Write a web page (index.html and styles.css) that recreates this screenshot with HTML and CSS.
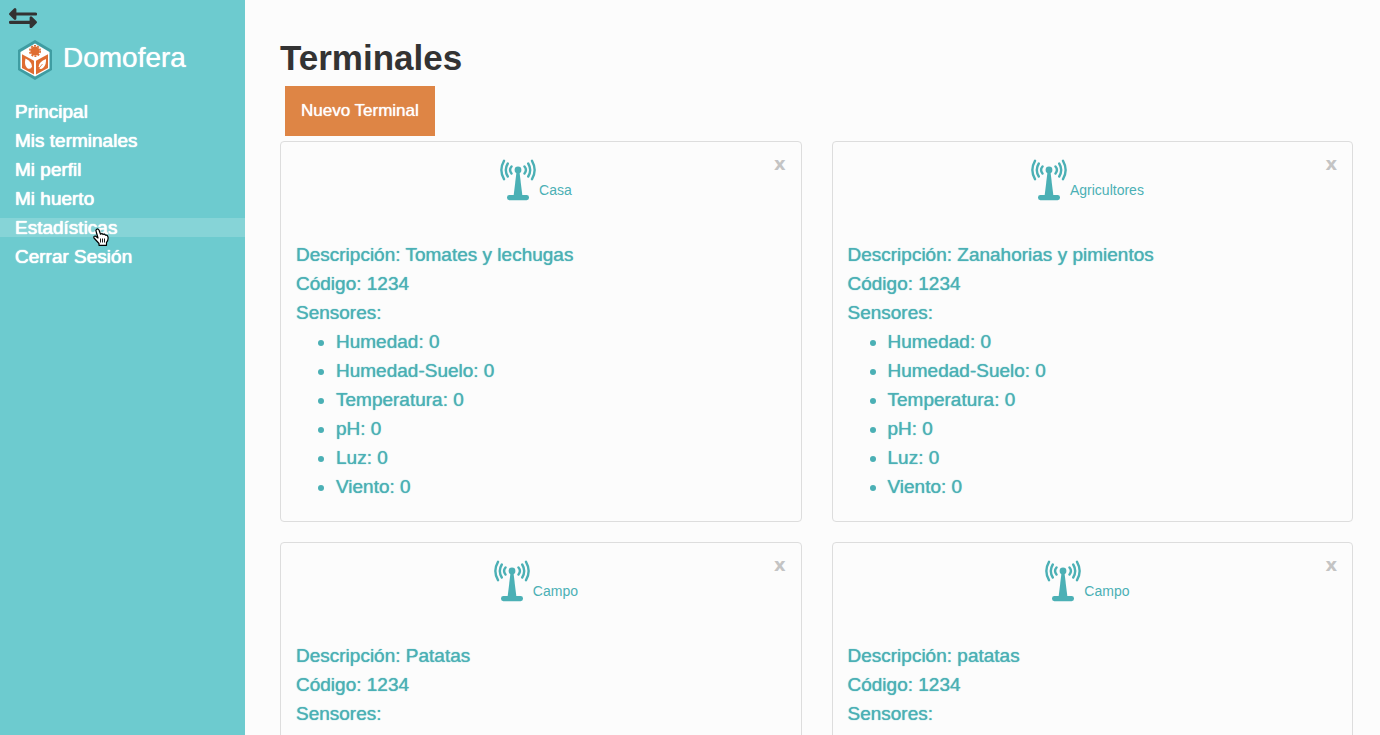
FILE: index.html
```html
<!DOCTYPE html>
<html lang="es">
<head>
<meta charset="utf-8">
<title>Domofera - Terminales</title>
<link rel="stylesheet" href="styles.css">
</head>
<body>
<svg class="defs" aria-hidden="true">
  <symbol id="antenna" viewBox="0 0 36 42">
    <g fill="none" stroke="currentColor" stroke-width="2.400" stroke-linecap="round">
      <path d="M11.500 7.500Q8.600 11 11.500 14.500M7.800 4.500Q3.800 11 7.800 17.500M4 1.800Q-1.300 11 4 20.200"/>
      <path d="M24.500 7.500Q27.400 11 24.500 14.500M28.200 4.500Q32.200 11 28.200 17.500M32 1.800Q37.300 11 32 20.200"/>
    </g>
    <g fill="currentColor">
      <circle cx="18" cy="11" r="3.400"/>
      <path d="M16.600 12h2.800l3 25h-8.800z"/>
      <rect x="7" y="36" width="22" height="5.200" rx="2.400"/>
    </g>
  </symbol>
</svg>
<div class="app">
  <aside class="sidebar">
    <button class="toggle" type="button" aria-label="Alternar menú">
      <svg class="toggle-icon" viewBox="0 0 28 20">
        <g fill="#333" stroke="#333" stroke-linejoin="round" stroke-linecap="round">
          <path d="M1.500 6 6 1.500v9z" stroke-width="2.800"/>
          <path d="M6 6h20.500M1.500 14.300h20" stroke-width="3.200"/>
          <path d="M26.500 14.300 22 9.800v9z" stroke-width="2.800"/>
        </g>
      </svg>
    </button>
    <div class="brand">
      <svg class="logo" viewBox="0 0 36 40" aria-hidden="true">
        <path d="M18 0 35 10v20L18 40 1 30V10z" fill="#3f9da2"/>
        <path d="M18 3.500 32.500 12v16.500L18 36.500 3.500 28.500V12z" fill="#fff"/>
        <path d="M5 14.300 17 20.800V34.600L5 27.900zM31 14.300 19 20.800V34.600l12-6.700z" fill="#df6d32"/>
        <circle cx="18" cy="11" r="4.600" fill="#df6d32"/>
        <circle cx="18" cy="11" r="5.200" fill="none" stroke="#df6d32" stroke-width="1.600" stroke-dasharray="2 1.270"/>
        <path d="M8.500 18.500Q15 22 15 26.500Q13.800 30.300 10 28Q7 25 8.500 18.500z" fill="#fff"/>
        <path d="M29 19Q22 21.500 21.700 26.500Q22.500 31 26.500 27.500Q29.500 24 29 19z" fill="#fff"/>
        <path d="m20.500 30 5-6" fill="none" stroke="#df6d32" stroke-width=".8"/>
      </svg>
      <span>Domofera</span>
    </div>
    <nav class="menu">
      <a href="#">Principal</a>
      <a href="#">Mis terminales</a>
      <a href="#">Mi perfil</a>
      <a href="#">Mi huerto</a>
      <a class="hovered" href="#">Estadísticas</a>
      <a href="#">Cerrar Sesión</a>
    </nav>
  </aside>
  <main class="content">
    <h1>Terminales</h1>
    <button class="new" type="button">Nuevo Terminal</button>
    <div class="cards">
      <article class="card">
        <header><h2><svg class="antenna"><use href="#antenna"/></svg>Casa</h2><button class="close" type="button" aria-label="Eliminar Casa">x</button></header>
        <p>Descripción: Tomates y lechugas</p>
        <p>Código: 1234</p>
        <p>Sensores:</p>
        <ul><li>Humedad: 0</li><li>Humedad-Suelo: 0</li><li>Temperatura: 0</li><li>pH: 0</li><li>Luz: 0</li><li>Viento: 0</li></ul>
      </article>
      <article class="card">
        <header><h2><svg class="antenna"><use href="#antenna"/></svg>Agricultores</h2><button class="close" type="button" aria-label="Eliminar Agricultores">x</button></header>
        <p>Descripción: Zanahorias y pimientos</p>
        <p>Código: 1234</p>
        <p>Sensores:</p>
        <ul><li>Humedad: 0</li><li>Humedad-Suelo: 0</li><li>Temperatura: 0</li><li>pH: 0</li><li>Luz: 0</li><li>Viento: 0</li></ul>
      </article>
      <article class="card">
        <header><h2><svg class="antenna"><use href="#antenna"/></svg>Campo</h2><button class="close" type="button" aria-label="Eliminar Campo">x</button></header>
        <p>Descripción: Patatas</p>
        <p>Código: 1234</p>
        <p>Sensores:</p>
      </article>
      <article class="card">
        <header><h2><svg class="antenna"><use href="#antenna"/></svg>Campo</h2><button class="close" type="button" aria-label="Eliminar Campo">x</button></header>
        <p>Descripción: patatas</p>
        <p>Código: 1234</p>
        <p>Sensores:</p>
      </article>
    </div>
  </main>
</div>
<svg class="pointer" viewBox="0 0 16 18" aria-hidden="true">
  <path d="M3.500 1.500Q5 .2 6 2L7.500 6.200Q9 5 10 6.500Q11.500 5.600 12.500 7.200Q14.500 6.800 15 9Q15.500 12.500 13.500 14.500V17.300H6V15.500L1 10Q.3 8 2.300 8L5 10 3 3Q2.700 2 3.500 1.500z" fill="#fff" stroke="#000" stroke-width="1.200" stroke-linejoin="round"/>
  <path d="M7.500 10.500v4M9.500 10.500v4M11.500 10.500v4" fill="none" stroke="#000" stroke-width=".9"/>
</svg>
</body>
</html>
```
FILE: styles.css
```css
* {
  box-sizing: border-box;
}

body {
  margin: 0;
  background: #fcfcfc;
  color: #333;
  font-family: "Liberation Sans", Arial, sans-serif;
  font-size: 19px;
  line-height: 29px;
}

h1, h2, p, ul {
  margin: 0;
}

button {
  border: 0;
  font-family: inherit;
  cursor: pointer;
}

.defs {
  display: none;
}

.app {
  display: grid;
  grid-template-columns: 245px 1fr;
  height: 100vh;
}

.sidebar {
  background: #6dcbcf;
  color: #fff;
}

.toggle {
  display: block;
  padding: 8px 9px 0;
  background: none;
}

.toggle-icon {
  display: block;
  width: 28px;
  height: 20px;
}

.brand {
  display: flex;
  align-items: center;
  gap: 10px;
  height: 40px;
  margin: 12px 17px 0;
  font-size: 28px;
  text-shadow: 0 0 1px;
}

.brand span {
  padding-bottom: 5px;
}

.logo {
  width: 36px;
  height: 40px;
}

.menu {
  display: flex;
  flex-direction: column;
  gap: 10px;
  margin-top: 22px;
}

.menu a {
  padding: 0 15px;
  color: #fff;
  line-height: 19px;
  text-decoration: none;
  text-shadow: 0 0 1px, 0 0 1px;
}

.menu .hovered {
  background: #86d4d7;
}

.content {
  overflow-y: auto;
  scrollbar-width: none;
  padding: 37px 27px 20px 35px;
}

h1 {
  font-size: 35px;
  font-weight: bold;
  line-height: 42px;
}

.new {
  display: block;
  margin: 7px 5px 5px;
  padding: 0 16px;
  background: #de8545;
  color: #fff;
  font-size: 17px;
  line-height: 50px;
  text-shadow: 0 0 1px;
}

.cards {
  display: grid;
  grid-template-columns: 1fr 1fr;
  gap: 20px 30px;
}

.card {
  min-height: 380px;
  padding: 0 15px 20px;
  border: 1px solid #ddd;
  border-radius: 4px;
  color: #4bb0b5;
}

.card header {
  display: flex;
  align-items: flex-start;
  height: 98px;
  padding-top: 13px;
}

.card h2 {
  display: flex;
  flex: 1;
  justify-content: center;
  gap: 3px;
  padding: 4px 0 0 2px;
  font-size: 14px;
  font-weight: normal;
  line-height: 62px;
}

.card p,
.card li {
  text-shadow: 0 0 1px;
}

.antenna {
  width: 36px;
  height: 42px;
}

.close {
  padding: 0;
  background: none;
  color: #c4c4c4;
  font-family: "DejaVu Sans", sans-serif;
  font-size: 18px;
  font-weight: bold;
  line-height: 18px;
}

.card ul {
  padding-left: 40px;
}

.pointer {
  position: absolute;
  left: 93px;
  top: 228px;
  width: 16px;
  height: 18px;
}
```
